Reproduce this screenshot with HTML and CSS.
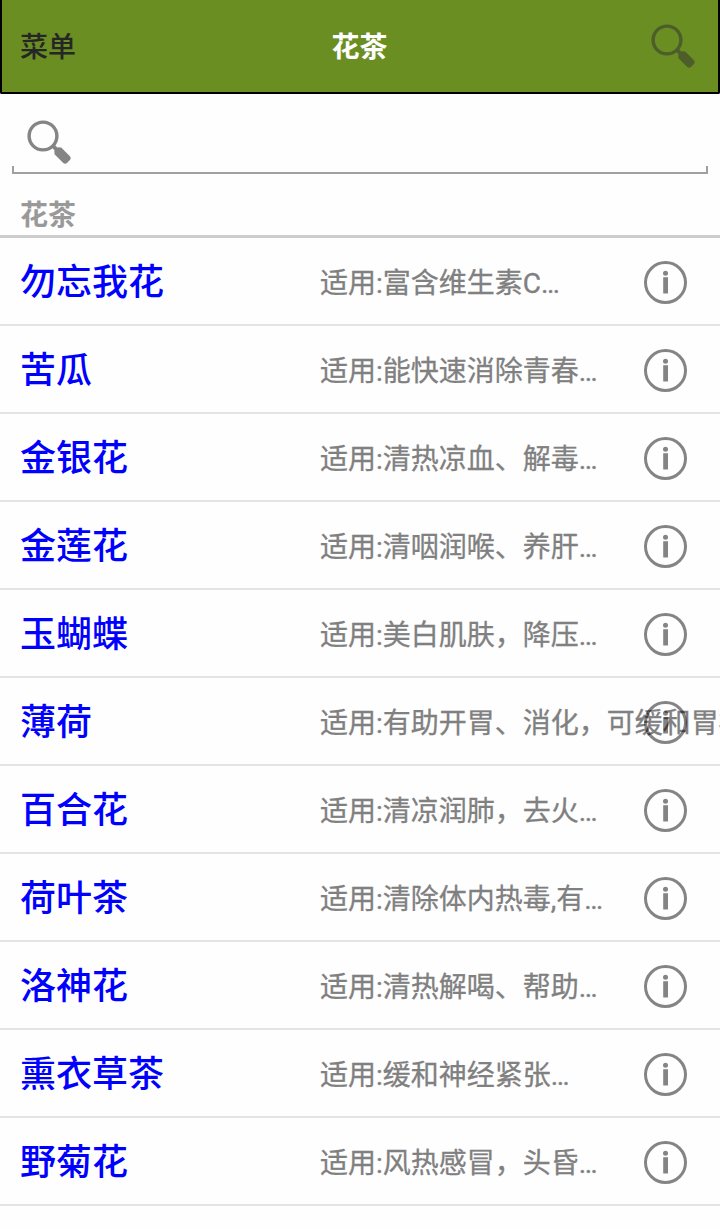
FILE: index.html
```
<!DOCTYPE html>
<html lang="zh-CN">
<head>
<meta charset="utf-8">
<title>花茶</title>
<link rel="stylesheet" href="styles.css">
</head>
<body>

<svg class="defs">
<symbol id="search" viewBox="0 0 44 44">
<circle cx="16" cy="16" r="13.9" fill="none" stroke="currentColor" stroke-width="3.4"/>
<g transform="rotate(45 16 16)" fill="currentColor">
<rect x="30" y="14" width="6" height="4"/>
<path d="M34.5 13.5 L37 11.3 H49 Q52 11.3 52 14.3 V17.7 Q52 20.7 49 20.7 H37 L34.5 18.5 Z"/>
</g>
</symbol>
<symbol id="info" viewBox="0 0 44 44">
<circle cx="21.5" cy="21.5" r="20" fill="none" stroke="currentColor" stroke-width="3"/>
<circle cx="21.5" cy="12.3" r="2.5" fill="currentColor"/>
<rect x="19.2" y="16.2" width="4.8" height="16.3" fill="currentColor"/>
</symbol>
</svg>

<div class="header">
<a class="menu">菜单</a>
<h1>花茶</h1>
<svg class="icon"><use href="#search"/></svg>
</div>

<div class="search">
<svg class="icon"><use href="#search"/></svg>
<div class="line"></div>
</div>

<h2>花茶</h2>

<ul class="list">
<li><span class="name">勿忘我花</span><span class="use">适用:富含维生素C…</span><svg class="icon"><use href="#info"/></svg></li>
<li><span class="name">苦瓜</span><span class="use">适用:能快速消除青春…</span><svg class="icon"><use href="#info"/></svg></li>
<li><span class="name">金银花</span><span class="use">适用:清热凉血、解毒…</span><svg class="icon"><use href="#info"/></svg></li>
<li><span class="name">金莲花</span><span class="use">适用:清咽润喉、养肝…</span><svg class="icon"><use href="#info"/></svg></li>
<li><span class="name">玉蝴蝶</span><span class="use">适用:美白肌肤，降压…</span><svg class="icon"><use href="#info"/></svg></li>
<li><span class="name">薄荷</span><span class="use">适用:有助开胃、消化，可缓和胃痛</span><svg class="icon"><use href="#info"/></svg></li>
<li><span class="name">百合花</span><span class="use">适用:清凉润肺，去火…</span><svg class="icon"><use href="#info"/></svg></li>
<li><span class="name">荷叶茶</span><span class="use">适用:清除体内热毒,有…</span><svg class="icon"><use href="#info"/></svg></li>
<li><span class="name">洛神花</span><span class="use">适用:清热解喝、帮助…</span><svg class="icon"><use href="#info"/></svg></li>
<li><span class="name">熏衣草茶</span><span class="use">适用:缓和神经紧张…</span><svg class="icon"><use href="#info"/></svg></li>
<li><span class="name">野菊花</span><span class="use">适用:风热感冒，头昏…</span><svg class="icon"><use href="#info"/></svg></li>
</ul>

</body>
</html>
```
FILE: styles.css
```
*{box-sizing:border-box;}
body{
margin:0;
background:#fefefe;
overflow:hidden;
font-family:Roboto,"Noto Sans CJK SC",sans-serif;
font-size:28px;
line-height:40px;}
.defs{
display:none;}
.icon{
display:block;
width:44px;
height:44px;}
.header{
display:grid;
grid-template-columns:1fr auto 1fr;
align-items:center;
height:94px;
padding:3px 23px 0 18px;
background:#6b8e23;
border:2px solid #000;
border-top:none;
border-radius:0 0 2px 2px;}
.header h1{
margin:0 -2px 0 2px;
color:#fff;
font-size:28px;
font-weight:bold;}
.header .icon{
justify-self:end;
margin-top:-3px;
color:#4d5e2b;}
.menu{
color:#262626;
font-weight:500;}
.search{
padding:26px 12px 0;
color:#858585;}
.search .icon{
margin-left:15px;}
.line{
height:8px;
margin-top:2px;
border:2px solid #a0a0a0;
border-top:none;}
h2{
height:64px;
margin:0;
padding:22px 20px 0;
color:#999;
border-bottom:3px solid #ccc;
font-size:28px;
font-weight:bold;}
.list{
margin:0;
padding:0;
list-style:none;}
.list li{
display:grid;
grid-template-columns:300px 324px 44px;
align-items:center;
height:88px;
padding:4px 0 0 20px;
border-bottom:2px solid #e4e4e4;
white-space:nowrap;}
.name{
color:#00f;
font-size:36px;
font-weight:500;}
.use{
padding-top:2px;
color:#808080;
-webkit-text-stroke:.3px #808080;}
.list .icon{
color:rgba(0,0,0,.48);}
```
